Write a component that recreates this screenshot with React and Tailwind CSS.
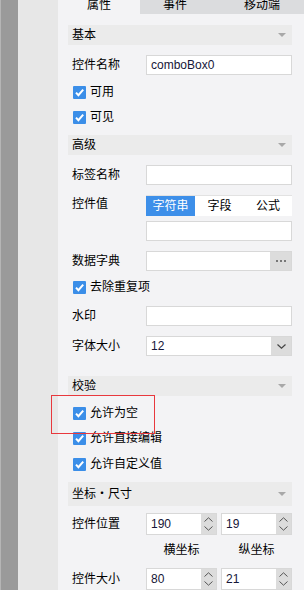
import React from "react";

const font = { fontFamily: '"Liberation Sans", "Noto Sans CJK SC", sans-serif' };

const Tri = () => (
  <svg width="8" height="4" viewBox="0 0 8 4">
    <path d="M0 0H8L4 4Z" fill="#a8a8a8" />
  </svg>
);

const Header = ({ title, className = "" }) => (
  <div className={`flex items-center justify-between bg-[#ebebeb] pl-[4px] pr-[6px] ${className}`}>
    <span>{title}</span>
    <Tri />
  </div>
);

const Check = () => (
  <svg width="13" height="13" viewBox="0 0 13 13" className="shrink-0">
    <rect width="13" height="13" rx="1" fill="#3b8ee8" />
    <path d="M3 6.6L5.4 9.2L10.2 3.6" fill="none" stroke="#fff" strokeWidth="2" />
  </svg>
);

const CheckRow = ({ label, className = "" }) => (
  <div className={`flex items-center h-[13px] pl-[5px] gap-[4px] ${className}`}>
    <Check />
    <span className="leading-[13px]">{label}</span>
  </div>
);

const Row = ({ label, className = "", children }) => (
  <div className={`flex items-center ${className}`}>
    <div className="w-[78px] pl-[4px]">{label}</div>
    {children}
  </div>
);

const Input = ({ value, children }) => (
  <div className="w-[146px] h-[20px] flex bg-white border border-[#d8d8d8]">
    <div className="flex-1 pl-[4px] leading-[18px] text-[#161638]">{value}</div>
    {children}
  </div>
);

const Spin = ({ value }) => (
  <div className="w-[71px] h-[22px] flex bg-white border border-[#d8d8d8]">
    <div className="flex-1 pl-[4px] leading-[20px] text-[#161638]">{value}</div>
    <div className="w-[15px] bg-[#dcdcdc] flex flex-col items-center justify-between py-[3px]">
      <svg width="9" height="5" viewBox="0 0 9 5">
        <path d="M0.5 4.5L4.5 0.8L8.5 4.5" fill="none" stroke="#555" strokeWidth="1" />
      </svg>
      <svg width="9" height="5" viewBox="0 0 9 5">
        <path d="M0.5 0.5L4.5 4.2L8.5 0.5" fill="none" stroke="#555" strokeWidth="1" />
      </svg>
    </div>
  </div>
);

export default function App() {
  return (
    <div
      className="relative w-[304px] h-[590px] flex overflow-hidden text-[12px] text-black"
      style={font}
    >
      <div className="w-[1px] bg-[#b5b5b5]" />
      <div className="w-[17px] bg-[#9a9a9a]" />
      <div className="w-[40px] bg-[#e7e7e7]" />
      <div className="flex-1 flex flex-col bg-[#f3f3f5]">
        <div className="flex h-[14px] overflow-hidden">
          <div className="w-[82px] flex justify-center">
            <span className="leading-[12px] mt-[-1px]">属性</span>
          </div>
          <div className="w-[70px] flex justify-center bg-[#dbdcde]">
            <span className="leading-[12px] mt-[-1px]">事件</span>
          </div>
          <div className="flex-1 flex justify-center pl-[10px] bg-[#dbdcde]">
            <span className="leading-[12px] mt-[-1px]">移动端</span>
          </div>
        </div>

        <div className="flex flex-col pl-[10px] pr-[12px]">
          <Header title="基本" className="mt-[11px] h-[20px]" />
          <Row label="控件名称" className="mt-[10px]">
            <Input value="comboBox0" />
          </Row>
          <CheckRow label="可用" className="mt-[11px]" />
          <CheckRow label="可见" className="mt-[12px]" />

          <Header title="高级" className="mt-[11px] h-[20px]" />
          <Row label="标签名称" className="mt-[10px]">
            <Input />
          </Row>
          <div className="flex mt-[10px]">
            <div className="w-[78px] pl-[4px] leading-[18px]">控件值</div>
            <div className="flex flex-col">
              <div className="w-[146px] h-[21px] flex border-t border-[#e2e2e2] bg-white">
                <div className="w-[49px] bg-[#3d8fe9] text-white flex items-center justify-center">
                  字符串
                </div>
                <div className="w-[49px] flex items-center justify-center">字段</div>
                <div className="flex-1 flex items-center justify-center">公式</div>
              </div>
              <div className="mt-[5px]">
                <Input />
              </div>
            </div>
          </div>
          <Row label="数据字典" className="mt-[10px]">
            <Input>
              <div className="w-[21px] bg-[#dcdcdc] flex items-center justify-center gap-[2px]">
                <span className="w-[2px] h-[2px] bg-[#777]" />
                <span className="w-[2px] h-[2px] bg-[#777]" />
                <span className="w-[2px] h-[2px] bg-[#777]" />
              </div>
            </Input>
          </Row>
          <CheckRow label="去除重复项" className="mt-[10px]" />
          <Row label="水印" className="mt-[12px]">
            <Input />
          </Row>
          <Row label="字体大小" className="mt-[10px]">
            <Input value="12">
              <div className="w-[20px] bg-[#dcdcdc] flex items-center justify-center">
                <svg width="9" height="5" viewBox="0 0 9 5">
                  <path d="M0.5 0.5L4.5 4.2L8.5 0.5" fill="none" stroke="#444" strokeWidth="1.2" />
                </svg>
              </div>
            </Input>
          </Row>

          <Header title="校验" className="mt-[20px] h-[20px]" />
          <CheckRow label="允许为空" className="mt-[11px]" />
          <CheckRow label="允许直接编辑" className="mt-[12px]" />
          <CheckRow label="允许自定义值" className="mt-[13px]" />

          <Header title="坐标・尺寸" className="mt-[11px] h-[24px]" />
          <Row label="控件位置" className="mt-[7px]">
            <div className="flex gap-[4px]">
              <Spin value="190" />
              <Spin value="19" />
            </div>
          </Row>
          <div className="flex pl-[78px] mt-[6px] h-[18px] items-center">
            <div className="w-[71px] text-center">横坐标</div>
            <div className="w-[4px]" />
            <div className="w-[71px] text-center">纵坐标</div>
          </div>
          <Row label="控件大小" className="mt-[9px]">
            <div className="flex gap-[4px]">
              <Spin value="80" />
              <Spin value="21" />
            </div>
          </Row>
        </div>
      </div>

      <div className="absolute left-[51px] top-[395px] w-[104px] h-[39px] border border-[#e8383d]" />
    </div>
  );
}
